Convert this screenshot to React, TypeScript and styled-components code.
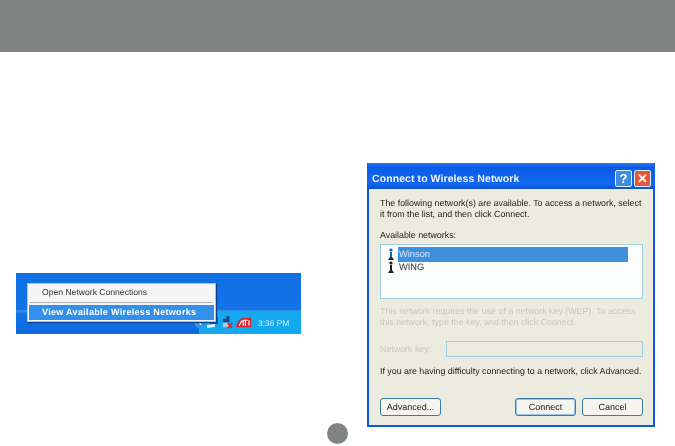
import React from 'react';
import styled, { createGlobalStyle } from 'styled-components';

const GlobalStyle = createGlobalStyle`
  html, body { margin: 0; padding: 0; background: #fff; }
  #root { width: 675px; height: 446px; overflow: hidden; }
`;

const Page = styled.div`
  position: relative;
  width: 675px;
  height: 446px;
  background: #fff;
  font-family: 'Liberation Sans', Arial, sans-serif;
  text-rendering: geometricPrecision;
  overflow: hidden;
`;

const Header = styled.div`
  height: 52px;
  background: #808584;
`;

const Columns = styled.div`
  display: flex;
  align-items: flex-start;
  padding: 111px 20px 0 16px;
`;

const Taskbar = styled.div`
  position: relative;
  display: flex;
  align-items: flex-end;
  justify-content: flex-end;
  width: 285px;
  height: 61px;
  margin-top: 110px;
  background: linear-gradient(180deg, #0f6fe3 0%, #1274e6 60%, #3d96ee 62%, #1274e6 66%, #0c6ade 100%);
  filter: blur(0.4px);
`;

const Tray = styled.div`
  display: flex;
  align-items: center;
  width: 102px;
  height: 23px;
  box-sizing: border-box;
  background: #13a9ee;
`;

const TrayIcon = styled.span<{ $gap: number }>`
  display: flex;
  flex-shrink: 0;
  margin-left: ${(p) => p.$gap}px;
`;

const Clock = styled.span`
  margin-left: 7px;
  font-size: 8.4px;
  color: #cdeefc;
  white-space: nowrap;
`;

const Menu = styled.div`
  position: absolute;
  left: 11px;
  top: 10px;
  width: 189px;
  height: 39px;
  box-sizing: border-box;
  padding: 1px;
  background: #f4f5f4;
  border: 1px solid #b6c3d0;
  box-shadow: 1px 1px 1px #0a3f8c;
`;

const MenuItem = styled.div<{ $active?: boolean }>`
  height: ${(p) => (p.$active ? 15 : 16)}px;
  line-height: 15px;
  padding-left: 13px;
  font-size: ${(p) => (p.$active ? 9 : 8.6)}px;
  white-space: nowrap;
  color: ${(p) => (p.$active ? '#fff' : '#333')};
  font-weight: ${(p) => (p.$active ? 700 : 400)};
  letter-spacing: ${(p) => (p.$active ? '0.32px' : '0')};
  background: ${(p) => (p.$active ? '#3390ea' : 'transparent')};
`;

const MenuRule = styled.div`
  height: 1px;
  margin: 1px 1px 2px;
  background: #b0b4b8;
`;

const Dialog = styled.div`
  width: 288px;
  height: 264px;
  margin-left: 66px;
  box-sizing: border-box;
  display: flex;
  flex-direction: column;
  border: 2px solid #0f55e6;
  border-top: none;
  background: #ecebdf;
  filter: blur(0.35px);
`;

const TitleBar = styled.div`
  display: flex;
  align-items: center;
  justify-content: space-between;
  height: 26px;
  box-sizing: border-box;
  flex-shrink: 0;
  margin: 0 -2px;
  padding: 5px 4px 0 5px;
  background: linear-gradient(180deg, #2a7cf4 0%, #0a5ae6 15%, #1268f0 80%, #0b50d0 100%);
  border-radius: 3px 3px 0 0;
`;

const TitleText = styled.span`
  font-size: 10.5px;
  font-weight: 700;
  letter-spacing: 0.08px;
  color: #f2f6ff;
`;

const TitleButtons = styled.div`
  display: flex;
  gap: 2px;
`;

const TitleButton = styled.div<{ $bg: string }>`
  width: 17px;
  height: 17px;
  box-sizing: border-box;
  display: flex;
  align-items: center;
  justify-content: center;
  border: 1px solid #e4edf8;
  border-radius: 2px;
  background: ${(p) => p.$bg};
  color: #fff;
  font-size: 13px;
  font-weight: 700;
`;

const Body = styled.div`
  flex: 1;
  display: flex;
  flex-direction: column;
  padding: 9px 10px 0 11px;
`;

const Paragraph = styled.p<{ $disabled?: boolean; $top?: number }>`
  margin: ${(p) => p.$top ?? 0}px 0 0;
  font-size: 8.85px;
  line-height: 11px;
  white-space: nowrap;
  color: ${(p) => (p.$disabled ? '#c9c8bc' : '#222')};
`;

const ListBox = styled.div`
  height: 55px;
  flex-shrink: 0;
  margin-top: 3px;
  box-sizing: border-box;
  padding: 2px 14px 0 6px;
  background: #fbfdfd;
  border: 1px solid #9fd0de;
`;

const NetworkRow = styled.div`
  display: flex;
  align-items: center;
  gap: 3px;
  height: 15px;
  margin-bottom: -2px;
`;

const NetworkName = styled.span<{ $selected?: boolean }>`
  flex: 1;
  height: 15px;
  line-height: 15px;
  padding-left: 1px;
  font-size: 9.3px;
  color: ${(p) => (p.$selected ? '#d4e6fa' : '#333')};
  background: ${(p) => (p.$selected ? '#3f8fdc' : 'transparent')};
`;

const KeyRow = styled.div`
  display: flex;
  align-items: center;
  justify-content: space-between;
  margin-top: 13px;
`;

const KeyInput = styled.div`
  width: 197px;
  height: 16px;
  box-sizing: border-box;
  border: 1px solid #9fd0de;
  background: #ecebdf;
`;

const ButtonRow = styled.div`
  display: flex;
  justify-content: space-between;
  margin-top: 21px;
`;

const ButtonGroup = styled.div`
  display: flex;
  gap: 6px;
`;

const DialogButton = styled.div<{ $focused?: boolean }>`
  width: 61px;
  height: 18px;
  line-height: 16px;
  box-sizing: border-box;
  text-align: center;
  font-size: 9px;
  color: #222;
  background: #f5f5ee;
  border: 1px solid #3a7ca8;
  border-radius: 3px;
  box-shadow: ${(p) => (p.$focused ? 'inset 0 0 0 1px #9cc3ea' : 'none')};
`;

const PageDot = styled.div`
  position: absolute;
  left: 327px;
  top: 423px;
  width: 21px;
  height: 21px;
  border-radius: 50%;
  background: #808584;
`;

const SignalIcon = ({ color }: { color: string }) => (
  <svg width="8" height="13" viewBox="0 0 8 13">
    <circle cx="4" cy="2" r="1.6" fill={color} />
    <path d="M3 4h2v6H3z" fill={color} />
    <path d="M1 12l1.5-2.5h3L7 12z" fill="#222" />
  </svg>
);

const WirelessIcon = () => (
  <svg width="12" height="14" viewBox="0 0 12 14">
    <circle cx="6" cy="6" r="6" fill="#3a96dc" />
    <path d="M4 3l3 6" stroke="#e8f4ff" strokeWidth="1.4" />
  </svg>
);

const ComputerIcon = () => (
  <svg width="12" height="13" viewBox="0 0 12 13">
    <path d="M3 1h8v7H3z" fill="#2b4f8c" />
    <path d="M4 2h6v4H4z" fill="#a8d0f0" />
    <path d="M0 9l8-1v3l-8 1z" fill="#e6eef6" />
  </svg>
);

const SecurityIcon = () => (
  <svg width="11" height="15" viewBox="0 0 13 15">
    <path d="M1 3h4V0h4v7H1z" fill="#22408c" />
    <path d="M1 8h7v5H1z" fill="#b7c6e8" />
    <path d="M7 8l5 6M12 8l-5 6" stroke="#e0202a" strokeWidth="2" />
  </svg>
);

const AtiLogo = () => (
  <svg width="15" height="12" viewBox="0 0 19 13">
    <path d="M0 12C1 5 5 0 11 0h8v12H0z" fill="#d8202a" />
    <path d="M4 10l3-6h2v6M9 3h6M12 3v7M16.5 3v7" stroke="#fff" strokeWidth="1.5" fill="none" />
  </svg>
);

export default function App() {
  return (
    <Page>
      <GlobalStyle />
      <Header />
      <Columns>
        <Taskbar>
          <Tray>
            <TrayIcon $gap={-5}><WirelessIcon /></TrayIcon>
            <TrayIcon $gap={1}><ComputerIcon /></TrayIcon>
            <TrayIcon $gap={3}><SecurityIcon /></TrayIcon>
            <TrayIcon $gap={3}><AtiLogo /></TrayIcon>
            <Clock>3:36 PM</Clock>
          </Tray>
          <Menu>
            <MenuItem>Open Network Connections</MenuItem>
            <MenuRule />
            <MenuItem $active>View Available Wireless Networks</MenuItem>
          </Menu>
        </Taskbar>
        <Dialog>
          <TitleBar>
            <TitleText>Connect to Wireless Network</TitleText>
            <TitleButtons>
              <TitleButton $bg="#3f8de0">?</TitleButton>
              <TitleButton $bg="#e0573a">✕</TitleButton>
            </TitleButtons>
          </TitleBar>
          <Body>
            <Paragraph>
              The following network(s) are available. To access a network, select
              <br />
              it from the list, and then click Connect.
            </Paragraph>
            <Paragraph $top={10}>Available networks:</Paragraph>
            <ListBox>
              <NetworkRow>
                <SignalIcon color="#1a5fa8" />
                <NetworkName $selected>Winson</NetworkName>
              </NetworkRow>
              <NetworkRow>
                <SignalIcon color="#222" />
                <NetworkName>WING</NetworkName>
              </NetworkRow>
            </ListBox>
            <Paragraph $disabled $top={7}>
              This network requires the use of a network key (WEP). To access
              <br />
              this network, type the key, and then click Connect.
            </Paragraph>
            <KeyRow>
              <Paragraph $disabled>Network key:</Paragraph>
              <KeyInput />
            </KeyRow>
            <Paragraph $top={9}>If you are having difficulty connecting to a network, click Advanced.</Paragraph>
            <ButtonRow>
              <DialogButton>Advanced...</DialogButton>
              <ButtonGroup>
                <DialogButton $focused>Connect</DialogButton>
                <DialogButton>Cancel</DialogButton>
              </ButtonGroup>
            </ButtonRow>
          </Body>
        </Dialog>
      </Columns>
      <PageDot />
    </Page>
  );
}
